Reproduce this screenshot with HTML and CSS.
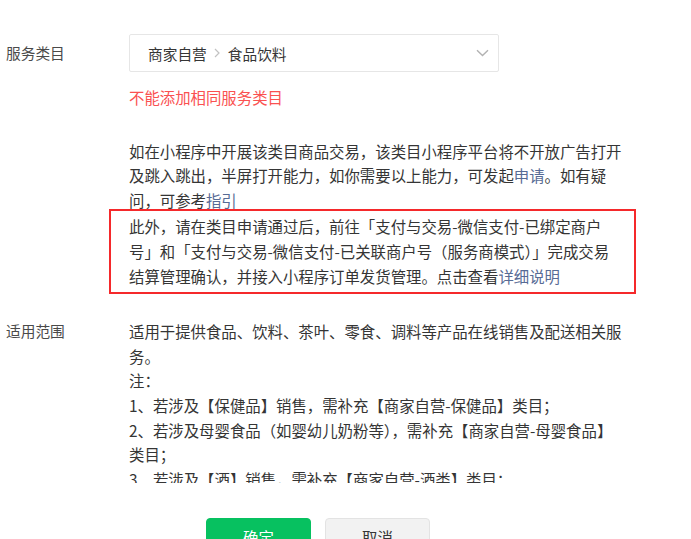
FILE: index.html
```html
<!DOCTYPE html>
<html>
<head>
    <title>服务类目</title>
    <link rel="stylesheet" href="styles.css">
</head>
<body>
    <div class="dialog">
        <div class="form-body">
            <!-- 服务类目 -->
            <div class="row">
                <div class="label label-select">服务类目</div>
                <div class="field">
                    <div class="select">
                        <span class="select-value">
                            商家自营
                            <svg class="sep" width="6" height="10" viewBox="0 0 6 10"><path d="M1 1l4 4-4 4" fill="none" stroke="#c2c2c2" stroke-width="1.2"/></svg>
                            食品饮料
                        </span>
                        <svg class="arrow" width="13" height="8" viewBox="0 0 13 8"><path d="M1 1.2l5.5 5.3 5.5-5.3" fill="none" stroke="#b2b2b2" stroke-width="1.4"/></svg>
                    </div>
                    <p class="error">不能添加相同服务类目</p>
                    <p class="desc">如在小程序中开展该类目商品交易，该类目小程序平台将不开放广告打开及跳入跳出，半屏打开能力，如你需要以上能力，可发起<a href="#">申请</a>。如有疑问，可参考<a href="#">指引</a></p>
                    <p class="desc marked">此外，请在类目申请通过后，前往「支付与交易-微信支付-已绑定商户号」和「支付与交易-微信支付-已关联商户号（服务商模式）」完成交易结算管理确认，并接入小程序订单发货管理。点击查看<a href="#">详细说明</a></p>
                </div>
            </div>

            <!-- 适用范围 -->
            <div class="row row-scope">
                <div class="label">适用范围</div>
                <div class="field">
                    <p class="desc">适用于提供食品、饮料、茶叶、零食、调料等产品在线销售及配送相关服务。<br>注：<br>1、若涉及【保健品】销售，需补充【商家自营-保健品】类目；<br>2、若涉及母婴食品（如婴幼儿奶粉等），需补充【商家自营-母婴食品】类目；<br>3、若涉及【酒】销售，需补充【商家自营-酒类】类目；<br>4、若涉及【特殊食品】销售，需补充相应类目。</p>
                </div>
            </div>
        </div>

        <div class="footer">
            <button class="btn btn-primary">确定</button>
            <button class="btn btn-default">取消</button>
        </div>
    </div>
</body>
</html>
```

FILE: styles.css
```css
body {
    margin: 0;
    padding: 0;
    background: #fff;
    font-family: "Noto Sans CJK SC", "Noto Sans", sans-serif;
    color: #353535;
    overflow: hidden;
}

.dialog {
    padding-left: 6px;
}

/* 内容区，超出部分被裁掉 */
.form-body {
    height: 483px;
    overflow: hidden;
    padding-top: 34px;
    box-sizing: border-box;
}

.row {
    display: flex;
}

.row-scope {
    margin-top: 31px;
}

.label {
    width: 123px;
    flex: none;
    font-size: 14.7px;
    line-height: 24.6px;
    color: #4a4a4a;
}

.label-select {
    line-height: 38px;
}

.field {
    width: 494px;
}

.select {
    width: 370px;
    height: 38px;
    box-sizing: border-box;
    border: 1px solid #e6e6e6;
    border-radius: 2px;
    display: flex;
    align-items: center;
    justify-content: space-between;
    padding: 0 9px 0 18px;
}

.select-value {
    display: flex;
    align-items: center;
    font-size: 14.7px;
    color: #353535;
}

.sep {
    margin: 0 8px 0 7px;
}

.error {
    margin: 13px 0 0;
    font-size: 15.4px;
    line-height: 24.6px;
    color: #fa5151;
}

.desc {
    margin: 0;
    font-size: 15.4px;
    line-height: 24.6px;
    color: #353535;
}

.error + .desc {
    margin-top: 29px;
}

.desc a {
    color: #576b95;
    text-decoration: none;
}

/* 红框标注 */
.marked {
    position: relative;
    margin-top: 2px;
}

.marked::before {
    content: "";
    position: absolute;
    left: -20px;
    top: -5px;
    right: -13px;
    bottom: -6px;
    border: 2px solid #f5292b;
    pointer-events: none;
}

.footer {
    display: flex;
    gap: 14px;
    padding: 35px 0 0 200px;
}

.btn {
    width: 105px;
    height: 38px;
    border-radius: 4px;
    font-family: inherit;
    font-size: 15.4px;
    cursor: pointer;
}

.btn-primary {
    background: #07c160;
    border: 1px solid #07c160;
    color: #fff;
}

.btn-default {
    background: #f2f2f2;
    border: 1px solid #e3e3e3;
    color: #353535;
}
```
